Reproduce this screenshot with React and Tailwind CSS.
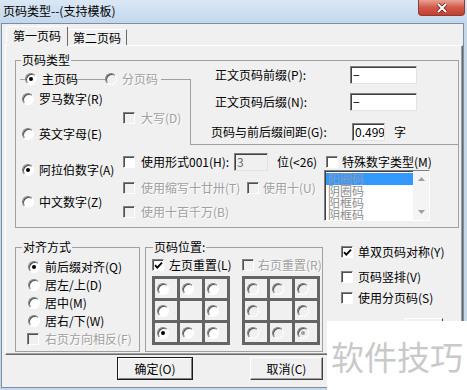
import React from "react";

const ETCH = "border-[#a0a0a0]";

function Radio({ checked = false, disabled = false }) {
  return (
    <span
      className={`flex h-[12px] w-[12px] shrink-0 items-center justify-center rounded-full border border-t-[#808080] border-l-[#808080] border-r-white border-b-white shadow-[inset_1px_1px_0_#505050] ${
        disabled ? "bg-[#f0f0f0]" : "bg-white"
      }`}
    >
      {checked && (
        <span className={`h-[4px] w-[4px] rounded-full ${disabled ? "bg-[#a0a0a0]" : "bg-black"}`} />
      )}
    </span>
  );
}

function Check({ checked = false, disabled = false }) {
  return (
    <span
      className={`flex h-[12px] w-[12px] shrink-0 items-center justify-center border border-t-[#808080] border-l-[#808080] border-r-white border-b-white shadow-[inset_1px_1px_0_#505050] ${
        disabled ? "bg-[#f0f0f0]" : "bg-white"
      }`}
    >
      {checked && (
        <svg width="9" height="9" viewBox="0 0 9 9">
          <path d="M1 4.2 L3.3 6.6 L8 1.6" fill="none" stroke="#000" strokeWidth="1.8" />
        </svg>
      )}
    </span>
  );
}

function Label({ children, disabled = false, className = "" }) {
  return (
    <span
      className={`block whitespace-nowrap text-[12px] leading-[12px] ${
        disabled ? "text-[#a0a0a0] [text-shadow:1px_1px_0_#fff]" : "text-black"
      } ${className}`}
    >
      {children}
    </span>
  );
}

function Legend({ children, ml }) {
  return (
    <legend className={`flex h-[12px] items-center px-[1px] text-[12px] leading-[12px] ${ml}`}>
      <Label>{children}</Label>
    </legend>
  );
}

function Field({ w, value, disabled = false, className = "" }) {
  return (
    <span
      className={`flex h-[18px] shrink-0 items-center overflow-hidden border border-t-[#808080] border-l-[#808080] border-r-[#e3e3e3] border-b-[#e3e3e3] pl-[2px] text-[12px] leading-[12px] shadow-[inset_1px_1px_0_#404040] ${w} ${
        disabled ? "bg-[#f0f0f0] text-[#6d6d6d]" : "bg-white text-black"
      } ${className}`}
    >
      {value}
    </span>
  );
}

function PosGrid({ checkedIndex, disabled }) {
  const cells = [0, 1, 2, 3, 4, 5, 6, 7, 8];
  return (
    <div className="grid w-[78px] grid-cols-3 gap-[3px] bg-[#646464] p-[3px]">
      {cells.map((i) => (
        <div key={i} className="flex h-[19px] items-center bg-[#f0f0f0] pl-[2px]">
          {i !== 4 && <Radio checked={i === checkedIndex} disabled={disabled} />}
        </div>
      ))}
    </div>
  );
}

function Button({ children, w, isDefault = false }) {
  return (
    <div
      className={`flex h-[23px] items-center justify-center border ${
        isDefault ? "border-[#1a1a1a]" : "border-t-white border-l-white border-r-[#404040] border-b-[#404040]"
      } bg-[#f0f0f0] ${w}`}
    >
      <div
        className={`flex h-full w-full items-center justify-center ${
          isDefault
            ? "border border-t-white border-l-white border-r-[#808080] border-b-[#808080]"
            : "shadow-[inset_-1px_-1px_0_#a0a0a0]"
        }`}
      >
        <Label>{children}</Label>
      </div>
    </div>
  );
}

export default function App() {
  return (
    <div className="relative h-[390px] w-[467px] overflow-hidden bg-[#c6d7ea] font-['Noto_Sans_CJK_SC',sans-serif]">
      {/* title bar */}
      <div className="flex h-[23px] items-start justify-between bg-linear-to-b from-[#dae7f5] to-[#c3d7ed]">
        <span className="ml-[3px] mt-[4px] text-[12px] leading-[14px] text-black">页码类型--(支持模板)</span>
        <div className="mr-[2px] flex h-[16px] w-[47px] items-center justify-center rounded-b-[4px] border border-t-0 border-[#8a3b33] bg-linear-to-b from-[#e8a293] via-[#d0594a] to-[#c4402f]">
          <svg width="12" height="10" viewBox="0 0 12 10">
            <path d="M2 1 L10 9 M10 1 L2 9" stroke="#5a1d16" strokeWidth="3.4" />
            <path d="M2 1 L10 9 M10 1 L2 9" stroke="#fff" strokeWidth="2" />
          </svg>
        </div>
      </div>

      {/* client */}
      <div className="ml-[1px] flex h-[365px] w-[463px] flex-col border border-[#7b8ea5] bg-[#f0f0f0]">
        {/* tabs */}
        <div className="ml-[4px] mt-[2px] flex h-[19px] items-end">
          <div className="relative z-10 -mb-px flex h-[20px] w-[62px] items-start rounded-t-[2px] border border-b-0 border-t-white border-l-white border-r-[#696969] bg-[#f0f0f0] pl-[6px] pt-[3px]">
            <Label>第一页码</Label>
          </div>
          <div className="flex h-[16px] w-[59px] items-start border border-b-0 border-t-white border-l-[#f0f0f0] border-r-[#696969] pl-[4px] pt-[2px]">
            <Label>第二页码</Label>
          </div>
        </div>

        {/* panel */}
        <div className="ml-[3px] flex h-[310px] w-[458px] flex-col border border-t-white border-l-white border-r-[#696969] border-b-[#696969] shadow-[inset_-1px_-1px_0_#a0a0a0]">
          {/* 页码类型 */}
          <fieldset className={`ml-[9px] mt-[8px] h-[174px] w-[444px] border ${ETCH}`}>
            <Legend ml="ml-[5px]">页码类型</Legend>

            <div className="flex h-[79px]">
              {/* main / sub page frame */}
              <div className="flex w-[175px] flex-col">
                <div className="mt-[7px] flex h-[12px] items-center">
                  <span className={`ml-[4px] h-[6px] w-[5px] self-end border-t ${ETCH}`} />
                  <Radio checked />
                  <Label className="ml-[5px]">主页码</Label>
                  <span className={`h-[6px] w-[27px] self-end border-t ${ETCH}`} />
                  <Radio disabled />
                  <Label disabled className="ml-[5px]">分页码</Label>
                  <span className={`ml-[3px] h-[6px] flex-1 self-end border-t border-r ${ETCH}`} />
                </div>
                <div className={`flex flex-1 flex-col border-r ${ETCH}`}>
                  <div className="ml-[6px] mt-[8px] flex h-[12px] items-center">
                    <Radio />
                    <Label className="ml-[5px]">罗马数字(R)</Label>
                  </div>
                  <div className="ml-[107px] mt-[7px] flex h-[12px] items-center">
                    <Check disabled />
                    <Label disabled className="ml-[6px]">大写(D)</Label>
                  </div>
                  <div className="ml-[6px] mt-[4px] flex h-[12px] items-center">
                    <Radio />
                    <Label className="ml-[5px]">英文字母(E)</Label>
                  </div>
                </div>
              </div>

              {/* prefix / suffix */}
              <div className={`flex h-[79px] flex-1 flex-col border-b ${ETCH}`}>
                <div className="flex h-[18px] items-center">
                  <Label className="ml-[24px] w-[135px]">正文页码前缀(P):</Label>
                  <Field w="w-[67px]" value="−" />
                </div>
                <div className="mt-[9px] flex h-[18px] items-center">
                  <Label className="ml-[24px] w-[135px]">正文页码后缀(N):</Label>
                  <Field w="w-[67px]" value="−" />
                </div>
                <div className="mt-[12px] flex h-[18px] items-center">
                  <Label className="ml-[20px] w-[141px]">页码与前后缀间距(G):</Label>
                  <Field w="w-[33px]" value="0.499" />
                  <Label className="ml-[9px]">字</Label>
                </div>
              </div>
            </div>

            <div className="flex">
              <div className="flex w-[107px] flex-col">
                <div className="ml-[6px] mt-[19px] flex h-[12px] items-center">
                  <Radio checked />
                  <Label className="ml-[5px]">阿拉伯数字(A)</Label>
                </div>
                <div className="ml-[6px] mt-[20px] flex h-[12px] items-center">
                  <Radio />
                  <Label className="ml-[5px]">中文数字(Z)</Label>
                </div>
              </div>

              <div className="flex flex-col">
                <div className="mt-[8px] flex h-[17px] items-center">
                  <Check />
                  <Label className="ml-[6px] w-[93px]">使用形式001(H):</Label>
                  <Field w="w-[34px]" value="3" disabled />
                  <Label className="ml-[9px] w-[49px]">位(&lt;26)</Label>
                  <Check />
                  <Label className="ml-[4px]">特殊数字类型(M)</Label>
                </div>
                <div className="flex">
                  <div className="flex w-[201px] flex-col">
                    <div className="mt-[12px] flex h-[12px] items-center">
                      <Check disabled />
                      <Label disabled className="ml-[6px] w-[106px]">使用缩写十廿卅(T)</Label>
                      <Check disabled />
                      <Label disabled className="ml-[4px]">使用十(U)</Label>
                    </div>
                    <div className="mt-[12px] flex h-[12px] items-center">
                      <Check disabled />
                      <Label disabled className="ml-[6px]">使用十百千万(B)</Label>
                    </div>
                  </div>
                  <div className="flex h-[51px] w-[106px] border border-t-[#808080] border-l-[#808080] border-r-white border-b-white bg-white shadow-[inset_1px_1px_0_#404040]">
                    <div className="flex flex-1 flex-col overflow-hidden pl-px pt-[2px]">
                      {["阳圈码", "阴圈码", "阳框码", "阴框码"].map((t, i) => (
                        <div
                          key={t}
                          className={`h-[12px] shrink-0 pl-[2px] text-[12px] leading-[12px] ${
                            i === 0 ? "bg-[#3399ff] text-[#8a9bb8]" : "text-[#8c8c8c]"
                          }`}
                        >
                          {t}
                        </div>
                      ))}
                    </div>
                    <div className="flex w-[16px] flex-col justify-between bg-[#f4f4f4]">
                      <div className="flex h-[16px] items-center justify-center">
                        <svg width="7" height="4" viewBox="0 0 7 4"><path d="M0 4 L3.5 0 L7 4 Z" fill="#a0a0a0" /></svg>
                      </div>
                      <div className="flex h-[16px] items-center justify-center">
                        <svg width="7" height="4" viewBox="0 0 7 4"><path d="M0 0 L3.5 4 L7 0 Z" fill="#a0a0a0" /></svg>
                      </div>
                    </div>
                  </div>
                </div>
              </div>
            </div>
          </fieldset>

          {/* bottom section */}
          <div className="flex">
            <fieldset className={`ml-[9px] mt-[13px] h-[111px] w-[125px] border ${ETCH}`}>
              <Legend ml="ml-[6px]">对齐方式</Legend>
              <div className="ml-[12px] mt-[8px] flex h-[12px] items-center">
                <Radio checked />
                <Label className="ml-[5px]">前后缀对齐(Q)</Label>
              </div>
              <div className="ml-[12px] mt-[6px] flex h-[12px] items-center">
                <Radio />
                <Label className="ml-[5px]">居左/上(D)</Label>
              </div>
              <div className="ml-[12px] mt-[6px] flex h-[12px] items-center">
                <Radio />
                <Label className="ml-[5px]">居中(M)</Label>
              </div>
              <div className="ml-[12px] mt-[6px] flex h-[12px] items-center">
                <Radio />
                <Label className="ml-[5px]">居右/下(W)</Label>
              </div>
              <div className="ml-[11px] mt-[6px] flex h-[12px] items-center">
                <Check disabled />
                <Label disabled className="ml-[6px]">右页方向相反(F)</Label>
              </div>
            </fieldset>

            <fieldset className={`ml-[5px] mt-[13px] h-[111px] w-[178px] border ${ETCH}`}>
              <Legend ml="ml-[7px]">页码位置:</Legend>
              <div className="ml-[6px] mt-[6px] flex h-[12px] items-center">
                <Check checked />
                <Label className="ml-[5px] w-[73px]">左页重置(L)</Label>
                <Check disabled />
                <Label disabled className="ml-[4px]">右页重置(R)</Label>
              </div>
              <div className="ml-[6px] mt-[5px] flex gap-[12px]">
                <PosGrid checkedIndex={6} />
                <PosGrid checkedIndex={8} disabled />
              </div>
            </fieldset>

            <div className="ml-[18px] mt-[18px] flex flex-col">
              <div className="flex h-[12px] items-center">
                <Check checked />
                <Label className="ml-[5px]">单双页码对称(Y)</Label>
              </div>
              <div className="mt-[13px] flex h-[12px] items-center">
                <Check />
                <Label className="ml-[5px]">页码竖排(V)</Label>
              </div>
              <div className="mt-[9px] flex h-[12px] items-center">
                <Check />
                <Label className="ml-[5px]">使用分页码(S)</Label>
              </div>
              <div className="ml-[64px] mt-[14px] h-[23px] w-[38px] border border-t-white border-l-white border-r-[#404040] border-b-[#404040]" />
            </div>
          </div>
        </div>

        {/* buttons */}
        <div className="mt-[2px] flex">
          <div className="ml-[115px]">
            <Button w="w-[76px]" isDefault>确定(O)</Button>
          </div>
          <div className="ml-[57px]">
            <Button w="w-[73px]">取消(C)</Button>
          </div>
        </div>
      </div>

      {/* watermark */}
      <div className="absolute bottom-0 right-0 flex h-[69px] w-[140px] items-center justify-center bg-white">
        <span className="text-[33px] leading-[36px] text-[#c9c9c9]">软件技巧</span>
      </div>
    </div>
  );
}
